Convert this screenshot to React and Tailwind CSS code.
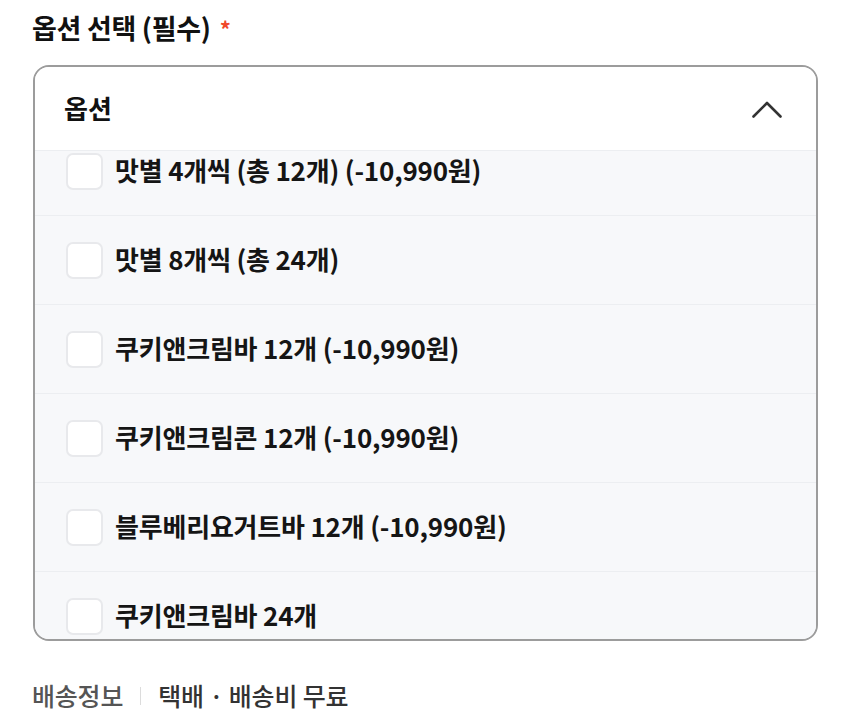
const options = [
  "맛별 4개씩 (총 12개) (-10,990원)",
  "맛별 8개씩 (총 24개)",
  "쿠키앤크림바 12개 (-10,990원)",
  "쿠키앤크림콘 12개 (-10,990원)",
  "블루베리요거트바 12개 (-10,990원)",
  "쿠키앤크림바 24개",
];

export default function App() {
  return (
    <div
      className="w-[850px] h-[716px] bg-white px-[32px] pt-[8px] overflow-hidden"
      style={{ fontFamily: '"Noto Sans CJK KR", "Noto Sans", sans-serif' }}
    >
      {/* Title */}
      <div className="flex items-center h-[40px] text-[27px] font-bold text-[#111] tracking-[-0.3px]">
        옵션 선택 (필수)
        <span className="ml-[9px] text-[22px] text-[#f0482a] leading-none">*</span>
      </div>

      {/* Option select box */}
      <div className="mt-[17px] ml-px w-[785px] rounded-[16px] border-2 border-[#9c9c9c] overflow-hidden">
        <div className="h-[84px] flex items-center justify-between pl-[29px] pr-[34px] bg-white border-b border-[#eceef1]">
          <span className="text-[26px] font-bold text-[#111] -mt-[2px]">옵션</span>
          <svg width="30" height="17" viewBox="0 0 30 17" fill="none" className="mt-[1px]">
            <polyline
              points="1.5,15.5 15,2 28.5,15.5"
              stroke="#333"
              strokeWidth="2.6"
              strokeLinecap="round"
              strokeLinejoin="round"
            />
          </svg>
        </div>
        <div className="h-[488px] overflow-hidden bg-[#f7f8fa]">
          <div className="-mt-[24px]">
            {options.map((opt) => (
              <div
                key={opt}
                className="h-[89px] flex items-center pl-[31px] gap-[12px] border-b border-[#eceef1]"
              >
                <div className="w-[37px] h-[37px] rounded-[7px] border-2 border-[#e8e9ec] bg-white shrink-0" />
                <span className="text-[26px] font-bold text-[#151515] tracking-[-0.2px] -mt-[3px]">{opt}</span>
              </div>
            ))}
          </div>
        </div>
      </div>

      {/* Shipping info */}
      <div className="mt-[36px] flex items-center text-[25px] tracking-[-0.2px]">
        <span className="text-[#555] font-medium">배송정보</span>
        <span className="mx-[17px] w-px h-[18px] bg-[#dcdcdc]" />
        <span className="text-[#333] font-medium">택배 · 배송비 무료</span>
      </div>
    </div>
  );
}
